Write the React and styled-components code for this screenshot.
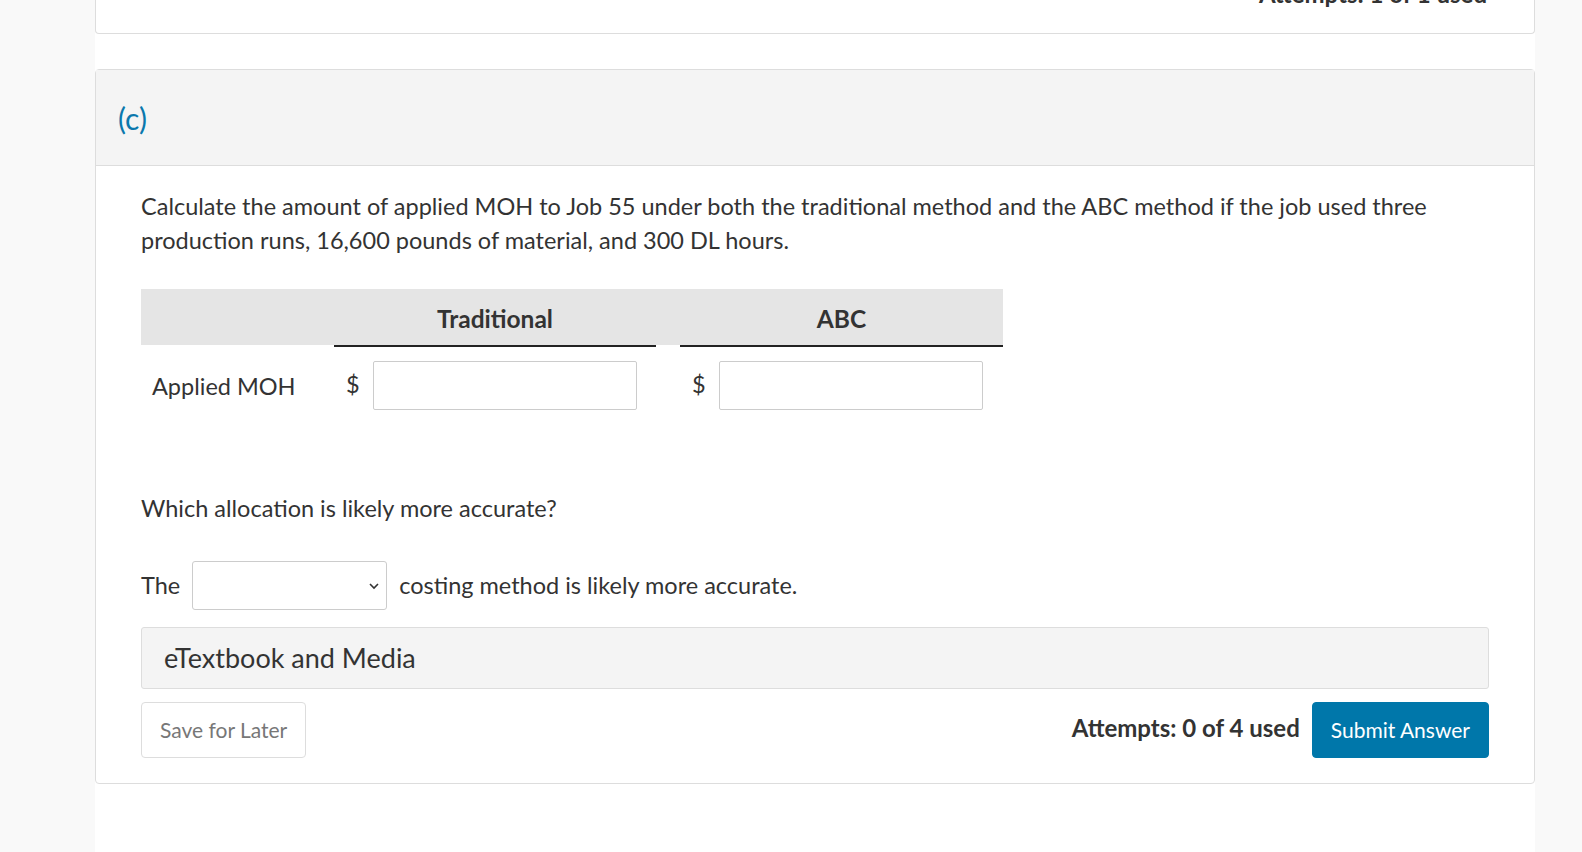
import { createGlobalStyle, styled } from "styled-components";

const GlobalStyle = createGlobalStyle`
  html, body {
    margin: 0;
    padding: 0;
    background: #f9f9f9;
    font-family: Lato, "Open Sans", sans-serif;
    color: #333;
  }
  * { box-sizing: border-box; }
`;

const Column = styled.div`
  margin-left: 95px;
  width: 1440px;
  min-height: 100vh;
  background: #fff;
  overflow: hidden;
`;

const TopCard = styled.div`
  height: 34px;
  border: 1px solid #ddd;
  border-top: none;
  border-radius: 0 0 4px 4px;
  display: flex;
  justify-content: flex-end;
  padding-right: 47px;
`;

const TopAttempts = styled.div`
  margin-top: -23px;
  font-size: 24px;
  line-height: 33px;
  font-weight: 700;
`;

const Card = styled.section`
  margin-top: 35px;
  border: 1px solid #ddd;
  border-radius: 4px;
`;

const CardHeader = styled.div`
  height: 96px;
  background: #f4f4f4;
  border-bottom: 1px solid #ddd;
  display: flex;
  align-items: center;
  padding-left: 22px;
  font-size: 30px;
  color: #0a78ad;
`;

const CardBody = styled.div`
  padding: 24px 45px 25px 45px;
`;

const Para = styled.p`
  margin: 0;
  font-size: 23.5px;
  line-height: 33.5px;
`;

const Grid = styled.div`
  margin-top: 32px;
  display: grid;
  grid-template-columns: 193px 322px 24px 323px;
`;

const HeadCell = styled.div`
  height: 58px;
  background: #e5e5e5;
  display: flex;
  align-items: center;
  justify-content: center;
  font-size: 24.5px;
  font-weight: 700;
  padding-top: 2px;
  border-bottom: 2px solid ${(p) => (p.$line ? "#222" : "transparent")};
  background-clip: padding-box;
`;

const LabelCell = styled.div`
  padding: 14px 0 0 11px;
  display: flex;
  align-items: center;
  height: 63px;
  font-size: 23.5px;
`;

const InputCell = styled.div`
  padding: 14px 0 0 12px;
  display: flex;
  align-items: center;
  gap: 13px;
  font-size: 23.5px;
`;

const Dollar = styled.span`
  margin-top: -4px;
`;

const TextInput = styled.input`
  width: 264px;
  height: 49px;
  border: 1px solid #ccc;
  border-radius: 2px;
  font-family: inherit;
  font-size: 20px;
  padding: 0 10px;
`;

const Question = styled(Para)`
  margin-top: 82px;
`;

const SentenceRow = styled.div`
  margin-top: 35px;
  display: flex;
  align-items: center;
  font-size: 23.5px;
`;

const SelectBox = styled.div`
  position: relative;
  width: 195px;
  height: 49px;
  margin: 0 12px 0 12px;
  border: 1px solid #ccc;
  border-radius: 3px;
  background: #fff;

  svg {
    position: absolute;
    right: 6px;
    top: 20px;
  }
`;

const MediaBar = styled.div`
  margin-top: 17px;
  height: 62px;
  background: #f4f4f4;
  border: 1px solid #ddd;
  border-radius: 3px;
  display: flex;
  align-items: center;
  padding-left: 22px;
  font-size: 27px;
`;

const Footer = styled.div`
  margin-top: 13px;
  display: flex;
  align-items: center;
  justify-content: space-between;
`;

const Button = styled.button`
  height: 56px;
  padding: 0 18px;
  border-radius: 4px;
  font-family: inherit;
  font-size: 21px;
  cursor: pointer;
  border: 1px solid ${(p) => (p.$primary ? "#0077aa" : "#ddd")};
  background: ${(p) => (p.$primary ? "#0077aa" : "#fff")};
  color: ${(p) => (p.$primary ? "#fff" : "#777")};
`;

const Right = styled.div`
  display: flex;
  align-items: center;
  gap: 12px;
`;

const Attempts = styled.span`
  font-size: 24px;
  font-weight: 700;
  margin-top: -5px;
`;

const App = () => {
  return (
    <>
      <GlobalStyle />
      <Column>
        <TopCard>
          <TopAttempts>Attempts: 1 of 1 used</TopAttempts>
        </TopCard>
        <Card>
          <CardHeader>(c)</CardHeader>
          <CardBody>
            <Para>
              Calculate the amount of applied MOH to Job 55 under both the
              traditional method and the ABC method if the job used three
              production runs, 16,600 pounds of material, and 300 DL hours.
            </Para>
            <Grid>
              <HeadCell />
              <HeadCell $line>Traditional</HeadCell>
              <HeadCell />
              <HeadCell $line>ABC</HeadCell>
              <LabelCell>Applied MOH</LabelCell>
              <InputCell>
                <Dollar>$</Dollar>
                <TextInput type="text" />
              </InputCell>
              <div />
              <InputCell>
                <Dollar>$</Dollar>
                <TextInput type="text" />
              </InputCell>
            </Grid>
            <Question>Which allocation is likely more accurate?</Question>
            <SentenceRow>
              The
              <SelectBox>
                <svg width="12" height="8" viewBox="0 0 12 8">
                  <path
                    d="M2 2 L6 6 L10 2"
                    fill="none"
                    stroke="#333"
                    strokeWidth="1.6"
                  />
                </svg>
              </SelectBox>
              costing method is likely more accurate.
            </SentenceRow>
            <MediaBar>eTextbook and Media</MediaBar>
            <Footer>
              <Button>Save for Later</Button>
              <Right>
                <Attempts>Attempts: 0 of 4 used</Attempts>
                <Button $primary>Submit Answer</Button>
              </Right>
            </Footer>
          </CardBody>
        </Card>
      </Column>
    </>
  );
};

export default App;
